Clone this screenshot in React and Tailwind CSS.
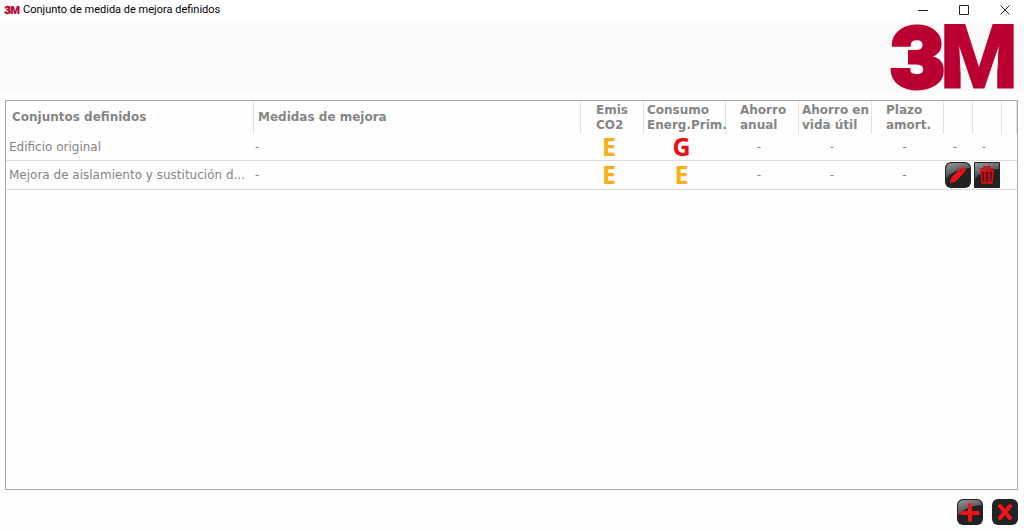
const GRADE_COLORS = {
  E: 'text-[#f7b01a]',
  G: 'text-[#ee0a14]',
};

const COLUMNS = [
  { label: 'Conjuntos definidos', width: 'w-[248px]', pad: 'pl-[6px]' },
  { label: 'Medidas de mejora', width: '', pad: 'pl-[4px]' },
  { label: 'Emis\nCO2', width: 'w-[63px]', pad: 'pl-[15px]' },
  { label: 'Consumo\nEnerg.Prim.', width: 'w-[82px]', pad: 'pl-[3px]' },
  { label: 'Ahorro\nanual', width: 'w-[73px]', pad: 'pl-[14px]' },
  { label: 'Ahorro en\nvida útil', width: 'w-[73px]', pad: 'pl-[3px]' },
  { label: 'Plazo\namort.', width: 'w-[72px]', pad: 'pl-[14px]' },
  { label: '', width: 'w-[29px]', pad: '' },
  { label: '', width: 'w-[29px]', pad: '' },
  { label: '', width: 'w-[15px]', pad: '' },
];

const ROWS = [
  { name: 'Edificio original', emis: 'E', consumo: 'G', editable: false, height: 'h-[27px]' },
  {
    name: 'Mejora de aislamiento y sustitución d...',
    emis: 'E',
    consumo: 'E',
    editable: true,
    height: 'h-[29px]',
  },
];

const Logo = ({ className }) => (
  <svg
    className={`overflow-visible ${className}`}
    viewBox="0 0 128 66"
    fill="#ba0030"
    stroke="#ba0030"
    fontWeight="900"
    role="img"
    aria-label="3M"
  >
    <text x="0" y="64" fontSize="84" fontFamily="Inter, sans-serif" strokeWidth="3">
      3
      <tspan x="51" fontSize="89" fontFamily="Roboto, sans-serif" strokeWidth="1">M</tspan>
    </text>
  </svg>
);

const Tile = ({ id, square, children }) => (
  <svg className="h-[26px] w-[26px]" viewBox="0 0 26 26" aria-hidden="true">
    <defs>
      <linearGradient id={id} x1="0" y1="0" x2="0.5" y2="1">
        <stop offset="0" stopColor="#9a9a9a" />
        <stop offset="1" stopColor="#343434" />
      </linearGradient>
    </defs>
    <rect width="26" height="26" rx={square ? 1 : 6} fill="#202224" />
    <path
      d={square ? 'M1 1H25V7Q8 7 1 17Z' : 'M1 7Q1 1 7 1H19Q24 1 25 6Q8 7 1 17Z'}
      fill={`url(#${id})`}
    />
    {children}
  </svg>
);

const PencilIcon = () => (
  <Tile id="shine-pencil">
    <path d="M5 21L6 16L15 7Q18 4 20 6Q22 8 19 11L10 20Z" fill="#f50c16" />
    <path d="M15 7L19 11" stroke="#8d1015" strokeWidth="1" />
  </Tile>
);

const TrashIcon = () => (
  <Tile id="shine-trash" square>
    <path d="M6 7H20M10 6V5H16V6" stroke="#c40d16" strokeWidth="1.500" fill="none" />
    <path d="M7 9H19L18 21H8Z" fill="#5d1216" stroke="#e20c16" strokeWidth="1.500" />
    <path d="M11 9V21M15 9V21" stroke="#e20c16" strokeWidth="1.500" />
  </Tile>
);

const AddIcon = () => (
  <Tile id="shine-add">
    <path d="M13 6V21M5 14H21" stroke="#f5101a" strokeWidth="4" strokeLinecap="round" />
  </Tile>
);

const CloseIcon = () => (
  <svg className="h-[26px] w-[26px]" viewBox="0 0 26 26" aria-hidden="true">
    <rect width="26" height="26" rx="6" fill="#222426" />
    <path d="M8 7L18 19M18 7L8 19" stroke="#f5101a" strokeWidth="4" strokeLinecap="round" />
  </svg>
);

const TitleBar = () => (
  <header className="flex h-[23px] shrink-0 items-start justify-between bg-white">
    <div className="flex h-[19px] items-center gap-[3px] pl-[4px]">
      <Logo className="h-2 w-4" />
      <h1 className="font-[Roboto,'Noto_Sans',sans-serif] text-[11px] leading-[20px] text-black">
        Conjunto de medida de mejora definidos
      </h1>
    </div>
    <div className="flex h-[19px] items-center gap-[31px] pr-[14px]">
      <button type="button" aria-label="Minimizar">
        <svg className="h-[10px] w-[10px]" viewBox="0 0 10 10" stroke="#222">
          <path d="M0 5.500H10" />
        </svg>
      </button>
      <button type="button" aria-label="Maximizar">
        <svg className="h-[10px] w-[10px]" viewBox="0 0 10 10" stroke="#222" fill="none">
          <path d="M.5.5H9.500V9.500H.5Z" />
        </svg>
      </button>
      <button type="button" aria-label="Cerrar">
        <svg className="h-[10px] w-[10px]" viewBox="0 0 10 10" stroke="#222">
          <path d="M.5.5L9.500 9.500M9.500.5L.5 9.500" />
        </svg>
      </button>
    </div>
  </header>
);

const Grade = ({ value }) => (
  <span
    className={`block pr-[7px] pb-[2px] font-['Open_Sans','Noto_Sans',sans-serif] text-[25px] leading-[24px] font-bold ${GRADE_COLORS[value]}`}
  >
    {value}
  </span>
);

const MeasuresTable = () => (
  <table className="w-full table-fixed border-separate border-spacing-0 text-[12px] text-[#858585]">
    <colgroup>
      {COLUMNS.map((col, i) => (
        <col key={i} className={col.width} />
      ))}
    </colgroup>
    <thead>
      <tr className="h-[33px]">
        {COLUMNS.map((col, i) => (
          <th
            key={i}
            scope="col"
            className={`border-r border-[#e2e2e2] p-0 text-left align-middle leading-[15px] font-bold whitespace-pre ${col.pad}`}
          >
            {col.label}
          </th>
        ))}
      </tr>
    </thead>
    <tbody className="[&_td]:border-b [&_td]:border-[#dcdcdc] [&_td]:p-0 [&_td]:align-middle">
      {ROWS.map((row) => (
        <tr key={row.name} className={`text-center ${row.height}`}>
          <td className="text-left">
            <div className="pl-[3px] whitespace-nowrap">{row.name}</div>
          </td>
          <td className="text-left">
            <div className="pl-[1px]">-</div>
          </td>
          <td>
            <Grade value={row.emis} />
          </td>
          <td>
            <Grade value={row.consumo} />
          </td>
          <td>
            <div className="pr-[7px]">-</div>
          </td>
          <td>
            <div className="pr-[7px]">-</div>
          </td>
          <td>
            <div className="pr-[7px]">-</div>
          </td>
          <td>
            {row.editable ? (
              <button type="button" aria-label="Editar" className="block pl-px">
                <PencilIcon />
              </button>
            ) : (
              <div className="pr-[7px]">-</div>
            )}
          </td>
          <td>
            {row.editable ? (
              <button type="button" aria-label="Eliminar" className="block pl-px">
                <TrashIcon />
              </button>
            ) : (
              <div className="pr-[7px]">-</div>
            )}
          </td>
          <td></td>
        </tr>
      ))}
    </tbody>
  </table>
);

export default function App() {
  return (
    <div className="flex h-screen flex-col bg-[#fefefe] font-['DejaVu_Sans',Verdana,sans-serif]">
      <TitleBar />
      <div className="flex h-[68px] shrink-0 items-center justify-end bg-[#fafafa] pr-[7px]">
        <Logo className="h-[66px] w-[128px]" />
      </div>
      <main className="mt-[9px] mr-[6px] ml-[5px] min-h-0 flex-1 overflow-hidden border border-[#a6a6a6] bg-[#fefefe]">
        <MeasuresTable />
      </main>
      <footer className="flex h-[41px] shrink-0 items-start justify-end gap-[9px] pt-[9px] pr-[6px]">
        <button type="button" aria-label="Añadir">
          <AddIcon />
        </button>
        <button type="button" aria-label="Cerrar ventana">
          <CloseIcon />
        </button>
      </footer>
    </div>
  );
}
